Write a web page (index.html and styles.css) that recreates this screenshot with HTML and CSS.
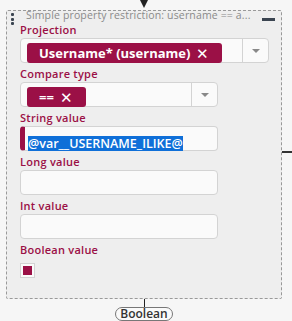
FILE: index.html
```html
<!DOCTYPE html>
<html lang="en">
<head>
    <meta charset="UTF-8">
    <title>Simple property restriction</title>
    <link rel="stylesheet" href="styles.css">
</head>
<body>
    <div class="node">
        <div class="arrow-in"></div>

        <div class="card">
            <div class="port-right"></div>

            <div class="card-head">
                <div class="handle"><span></span><span></span><span></span></div>
                <div class="card-title">Simple property restriction: username == a...</div>
                <div class="collapse"></div>
            </div>

            <div class="field">
                <div class="label">Projection</div>
                <div class="select wide">
                    <div class="select-values">
                        <span class="chip">Username* (username)<span class="chip-x">✕</span></span>
                    </div>
                    <div class="select-arrow"><span class="caret"></span></div>
                </div>
            </div>

            <div class="field">
                <div class="label">Compare type</div>
                <div class="select">
                    <div class="select-values">
                        <span class="chip">==<span class="chip-x">✕</span></span>
                    </div>
                    <div class="select-arrow"><span class="caret"></span></div>
                </div>
            </div>

            <div class="field">
                <div class="label">String value</div>
                <div class="input focused"><span class="selected">@var__USERNAME_ILIKE@</span></div>
            </div>

            <div class="field">
                <div class="label">Long value</div>
                <div class="input"></div>
            </div>

            <div class="field">
                <div class="label">Int value</div>
                <div class="input"></div>
            </div>

            <div class="field">
                <div class="label">Boolean value</div>
                <div class="checkbox"><span></span></div>
            </div>
        </div>

        <div class="wire"></div>
        <div class="pill">Boolean</div>
        <div class="arrow-out"></div>
    </div>
</body>
</html>
```

FILE: styles.css
```css
/* Basic styling */
body {
    margin: 0;
    padding: 0;
    background-color: #f6f6f6;
    font-family: "Open Sans", "Noto Sans", sans-serif;
}
.node {
    width: 276px;
    margin-left: 6px;
    display: flex;
    flex-direction: column;
    align-items: center;
}
.arrow-in {
    width: 0;
    height: 0;
    border-left: 4px solid transparent;
    border-right: 4px solid transparent;
    border-top: 8px solid #222;
    margin-bottom: 2px;
}
.card {
    position: relative;
    align-self: stretch;
    border: 1px dashed #999;
    border-radius: 2px;
    background-color: #eeeeee;
    padding: 0 12px 16px 13px;
}
.port-right {
    position: absolute;
    right: -11px;
    top: 140px;
    width: 10px;
    height: 2px;
    background-color: #333;
}
.card-head {
    display: flex;
    align-items: flex-start;
    height: 12px;
    margin-left: -9px;
}
.handle {
    display: flex;
    flex-direction: column;
    gap: 1.5px;
    width: 3px;
    margin: 2px 12px 0 0;
}
.handle span {
    width: 3px;
    height: 3px;
    border-radius: 1px;
    background-color: #3a4450;
}
.card-title {
    flex: 1;
    font-size: 10.5px;
    line-height: 8px;
    letter-spacing: 0.15px;
    color: #8a8a8a;
    white-space: nowrap;
}
.collapse {
    width: 13px;
    height: 3px;
    margin: 7px -6px 0 0;
    background-color: #3a4450;
}
.field {
    margin-bottom: 4px;
}
.label {
    font-size: 11px;
    font-weight: 600;
    line-height: 14px;
    letter-spacing: 0.25px;
    margin-bottom: 1px;
    color: #9b1046;
}
.field:first-of-type .label {
    margin-bottom: 0;
}
.select,
.input {
    box-sizing: border-box;
    width: 198px;
    height: 25px;
    border: 1px solid #d3d3d3;
    border-radius: 4px;
    background-color: #fafafa;
}
.select {
    display: flex;
}
.select.wide {
    width: 249px;
}
.select-values {
    flex: 1;
    padding: 2px 6px;
}
.chip {
    display: inline-flex;
    align-items: center;
    height: 20px;
    padding: 0 13px 0 12px;
    border-radius: 3px;
    background-color: #9b1046;
    color: white;
    font-size: 13px;
    font-weight: 700;
    white-space: nowrap;
}
.chip-x {
    margin-left: 6px;
    font-size: 15px;
    font-weight: 400;
}
.select-arrow {
    width: 25px;
    border-left: 1px solid #d3d3d3;
    display: flex;
    align-items: center;
    justify-content: center;
}
.caret {
    width: 0;
    height: 0;
    border-left: 4px solid transparent;
    border-right: 4px solid transparent;
    border-top: 4px solid #888;
}
.input.focused {
    border-left: 5px solid #9b1046;
    padding: 4px 0 0 3px;
}
.selected {
    display: inline-block;
    line-height: 15px;
    background-color: #0f6fd8;
    color: white;
    font-size: 12.5px;
    font-weight: 600;
}
.checkbox {
    box-sizing: border-box;
    width: 15px;
    height: 15px;
    margin-top: 6px;
    padding: 2px;
    border: 1px solid #d3d3d3;
    background-color: #fafafa;
}
.checkbox span {
    display: block;
    width: 100%;
    height: 100%;
    background-color: #9b1046;
}
.wire {
    width: 1px;
    height: 8px;
    background-color: #222;
}
.pill {
    box-sizing: border-box;
    height: 14px;
    padding: 0 4px;
    border: 1px solid #777;
    border-radius: 7px;
    background-color: #fafafa;
    font-size: 12px;
    font-weight: 600;
    line-height: 12px;
    color: #333;
}
.arrow-out {
    width: 0;
    height: 0;
    margin-top: 2px;
    border-left: 3px solid transparent;
    border-right: 3px solid transparent;
    border-top: 4px solid #222;
}
```
